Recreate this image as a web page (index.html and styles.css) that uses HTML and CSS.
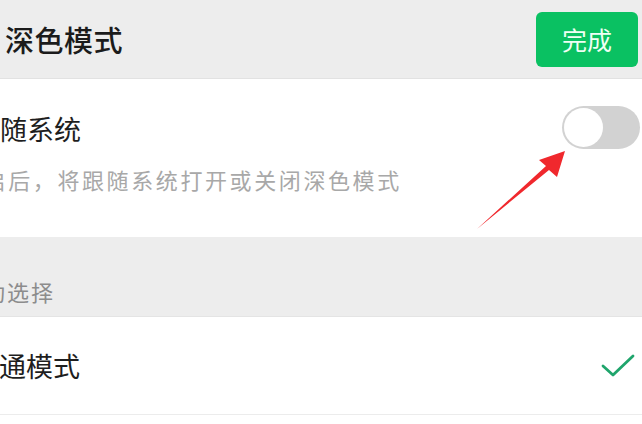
FILE: index.html
```html
<!DOCTYPE html>
<html lang="zh-CN">
<head>
    <meta charset="UTF-8">
    <meta name="viewport" content="width=device-width, initial-scale=1.0">
    <title>深色模式</title>
    <link rel="stylesheet" href="styles.css">
</head>
<body>

<div class="screen">
    <div class="top-bar">
        <h1 class="page-title">深色模式</h1>
        <button class="done-btn">完成</button>
    </div>

    <div class="group">
        <div class="follow-row">
            <div class="follow-text">
                <p class="row-title">跟随系统</p>
                <p class="row-desc">开启后，将跟随系统打开或关闭深色模式</p>
            </div>
            <div class="switch"><span class="knob"></span></div>
        </div>
    </div>

    <p class="group-label">手动选择</p>

    <div class="group">
        <div class="mode-row">
            <p class="row-title">普通模式</p>
            <svg class="check" width="34" height="26" viewBox="0 0 34 26">
                <polyline points="2,13 12,22 32,3" fill="none" stroke="#1fa56c" stroke-width="2.8" stroke-linecap="round" stroke-linejoin="round"/>
            </svg>
        </div>
    </div>

    <!-- annotation arrow pointing at the switch -->
    <svg class="pointer" width="642" height="424" viewBox="0 0 642 424">
        <polygon points="477,229 549,170 557,177 565,151 539,160 546,166" fill="#f0282d"/>
    </svg>
</div>

</body>
</html>
```

FILE: styles.css
```css
body {
    margin: 0;
    background: #ffffff;
    font-family: "Noto Sans CJK SC", "Noto Sans", sans-serif;
    overflow: hidden;
}
p {
    margin: 0;
}
.screen {
    position: relative;
    width: 642px;
    height: 424px;
    overflow: hidden;
    background: #ffffff;
}
.top-bar {
    height: 78px;
    background: #ededed;
    border-bottom: 1px solid #e2e2e2;
    display: flex;
    align-items: center;
    justify-content: space-between;
    padding: 0 4px 0 5px;
}
.page-title {
    margin: 0;
    font-size: 29px;
    font-weight: 500;
    letter-spacing: 0.5px;
    color: #1b1b1b;
}
.done-btn {
    width: 102px;
    height: 55px;
    border: none;
    border-radius: 6px;
    background: #0ac162;
    color: #effff4;
    font-family: inherit;
    font-size: 25px;
    padding: 0;
}
.group {
    background: #ffffff;
}
.follow-row {
    height: 158px;
    display: flex;
    justify-content: space-between;
    align-items: flex-start;
}
.follow-text {
    margin-left: -27px;
    padding-top: 30px;
}
.row-title {
    font-size: 27px;
    color: #1e1e1e;
    line-height: 40px;
}
.row-desc {
    margin-top: 14px;
    margin-left: -14px;
    font-size: 22px;
    letter-spacing: 2.6px;
    line-height: 32px;
    color: #a8a8a8;
}
.switch {
    margin-top: 27px;
    margin-right: 2px;
    width: 78px;
    height: 43px;
    border-radius: 22px;
    background: #d2d2d2;
    display: flex;
    align-items: center;
    padding-left: 2px;
    box-sizing: border-box;
}
.knob {
    width: 39px;
    height: 39px;
    border-radius: 50%;
    background: #ffffff;
}
.group-label {
    height: 80px;
    background: #ededed;
    box-sizing: border-box;
    padding-top: 38px;
    margin-left: -41px;
    font-size: 22px;
    letter-spacing: 2px;
    line-height: 32px;
    color: #8c8c8c;
    border-bottom: 1px solid #e4e4e4;
}
.mode-row {
    height: 97px;
    display: flex;
    align-items: center;
    justify-content: space-between;
    border-bottom: 1px solid #ececec;
}
.mode-row .row-title {
    margin-left: -28px;
}
.check {
    margin-right: 7px;
}
.pointer {
    position: absolute;
    left: 0;
    top: 0;
}
```
